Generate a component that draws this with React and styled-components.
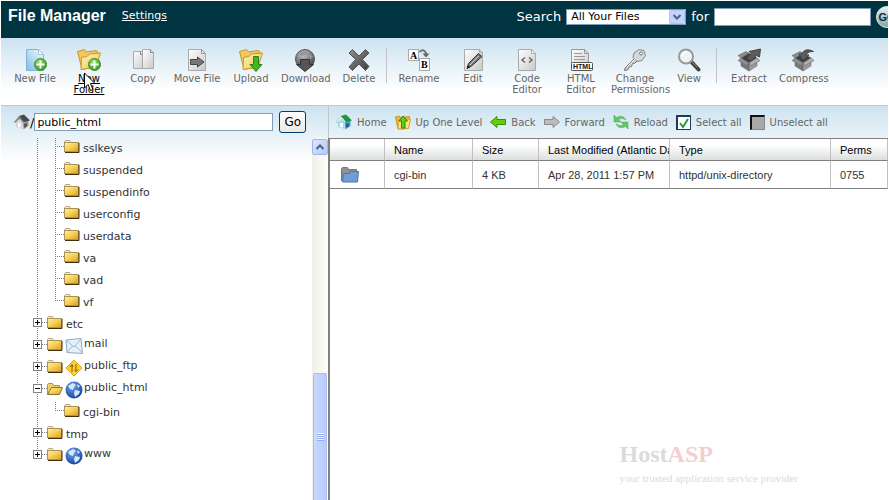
import React from "react";
import styled, { createGlobalStyle, css } from "styled-components";

const tools = [
  { label: "New File", icon: "newFile" },
  { label: "New Folder", icon: "newFolder", active: true },
  { label: "Copy", icon: "copy" },
  { label: "Move File", icon: "moveFile" },
  { label: "Upload", icon: "upload" },
  { label: "Download", icon: "download" },
  { label: "Delete", icon: "delete" },
  { separator: true },
  { label: "Rename", icon: "rename" },
  { label: "Edit", icon: "edit" },
  { label: "Code Editor", icon: "code" },
  { label: "HTML Editor", icon: "html" },
  { label: "Change Permissions", icon: "key" },
  { label: "View", icon: "view" },
  { separator: true },
  { label: "Extract", icon: "extract" },
  { label: "Compress", icon: "compress" }
];

const actions = [
  { label: "Home", icon: "home" },
  { label: "Up One Level", icon: "up" },
  { label: "Back", icon: "back" },
  { label: "Forward", icon: "forward" },
  { label: "Reload", icon: "reload" }
];

const tree = [
  { name: "sslkeys", level: 2 },
  { name: "suspended", level: 2 },
  { name: "suspendinfo", level: 2 },
  { name: "userconfig", level: 2 },
  { name: "userdata", level: 2 },
  { name: "va", level: 2 },
  { name: "vad", level: 2 },
  { name: "vf", level: 2, last: true },
  { name: "etc", level: 1 },
  { name: "mail", level: 1, badge: "mail" },
  { name: "public_ftp", level: 1, badge: "ftp" },
  { name: "public_html", level: 1, badge: "globe", open: true },
  { name: "cgi-bin", level: 2, last: true },
  { name: "tmp", level: 1 },
  { name: "www", level: 1, badge: "globe", last: true }
];

const files = [
  {
    name: "cgi-bin",
    size: "4 KB",
    modified: "Apr 28, 2011 1:57 PM",
    type: "httpd/unix-directory",
    perms: "0755"
  }
];

// Lettering inside the icons, needed by toolIcons below
const SvgLetter = styled.text`
  font-family: "Liberation Serif", serif;
  font-size: 10px;
  font-weight: 700;
  fill: #000;
`;

const HtmlLetter = styled.text`
  font-family: "Liberation Sans", Arial, sans-serif;
  font-size: 7px;
  font-weight: 700;
  fill: #111;
`;

// Shared gradients for all the icons
const IconDefs = () => (
  <DefsSvg aria-hidden="true">
    <defs>
      <linearGradient id="yellow" x1="0" y1="0" x2="1" y2="1">
        <stop offset="0" stopColor="#fff0a8" />
        <stop offset="0.5" stopColor="#f6cf55" />
        <stop offset="1" stopColor="#dc9a1c" />
      </linearGradient>
      <linearGradient id="paleYellow" x1="0" y1="0" x2="1" y2="1">
        <stop offset="0" stopColor="#fff6c4" />
        <stop offset="1" stopColor="#eebf45" />
      </linearGradient>
      <linearGradient id="grayPage" x1="0" y1="0" x2="1" y2="1">
        <stop offset="0" stopColor="#ffffff" />
        <stop offset="1" stopColor="#c9c9c9" />
      </linearGradient>
      <linearGradient id="bluePage" x1="1" y1="0" x2="0" y2="1">
        <stop offset="0" stopColor="#f2fafd" />
        <stop offset="1" stopColor="#7fbfe4" />
      </linearGradient>
      <linearGradient id="dark" x1="0" y1="0" x2="1" y2="1">
        <stop offset="0" stopColor="#8f8f8f" />
        <stop offset="1" stopColor="#3d3d3d" />
      </linearGradient>
      <radialGradient id="green" cx="0.4" cy="0.3" r="0.8">
        <stop offset="0" stopColor="#9be06a" />
        <stop offset="1" stopColor="#2f8f1c" />
      </radialGradient>
      <radialGradient id="ball" cx="0.4" cy="0.25" r="0.8">
        <stop offset="0" stopColor="#c8c8c8" />
        <stop offset="1" stopColor="#3a3a3a" />
      </radialGradient>
      <radialGradient id="blueBall" cx="0.4" cy="0.3" r="0.75">
        <stop offset="0" stopColor="#6fa8ee" />
        <stop offset="1" stopColor="#123c9c" />
      </radialGradient>
    </defs>
  </DefsSvg>
);

const PlusBall = () => (
  <g>
    <circle cx="17.5" cy="16.5" r="6" fill="url(#green)" stroke="#3a8a2a" />
    <path d="M17.5 12.5v8M13.5 16.5h8" stroke="#fff" strokeWidth="2" />
  </g>
);

const BigFolder = () => (
  <g stroke="#c9962a">
    <path d="M.5 3.5l7-2 2 2.500 9.500-1.500 2 1.500v4l-2 11-14 2.500z" fill="#f0c95c" />
    <path d="M4.5 9.5l5.500-1 2.500-2.500 11-1-4.500 14-15 2.500z" fill="url(#paleYellow)" />
  </g>
);

// Open carton seen from its front corner
const Box = () => (
  <g stroke="#606060" strokeWidth="0.5">
    <path d="M4 10l8-5 8 5-8 5z" fill="#3f3f3f" />
    <path d="M4 10l8 5v8l-8-5z" fill="#787878" />
    <path d="M12 15l8-5v8l-8 5z" fill="#9a9a9a" />
    <path d="M4 10l8-5-3-1.500-8 4z" fill="#8a8a8a" />
    <path d="M4 10l8 5-2.500 2.500L1 12.500z" fill="#8f8f8f" />
    <path d="M20 10l-8 5 2.500 2.500 8.500-5z" fill="#b0b0b0" />
  </g>
);

const toolIcons = {
  newFile: (
    <g>
      <path d="M3.5 1.5h12l5 5v16h-17z" fill="url(#bluePage)" stroke="#7fb4d6" />
      <path d="M15.5 1.5l5 5h-5z" fill="#fff" stroke="#9cc4dc" />
      <PlusBall />
    </g>
  ),
  newFolder: (
    <g>
      <BigFolder />
      <PlusBall />
    </g>
  ),
  copy: (
    <g stroke="#aaa">
      <path d="M2.5 3.5h8l3 3v14h-11z" fill="url(#grayPage)" />
      <path d="M11.5 1.5h8l3 3v16h-11z" fill="url(#grayPage)" />
      <path d="M19.5 1.5v3h3M9.5 3.5v3h2" fill="#ddd" stroke="#888" />
    </g>
  ),
  moveFile: (
    <g>
      <path d="M3.5 1.5h13l4 4v17h-17z" fill="url(#grayPage)" stroke="#aaa" />
      <path d="M16.5 1.5v4h4z" fill="#eee" stroke="#999" />
      <path d="M5.5 11.5h7V9l6.500 5-6.500 5v-2.500h-7z" fill="#777" stroke="#444" />
    </g>
  ),
  upload: (
    <g>
      <BigFolder />
      <path d="M14.5 8.500h5v8h3.500l-6 7-6-7h3.500z" fill="#45b328" stroke="#2c8418" />
    </g>
  ),
  download: (
    <g>
      <circle cx="12" cy="11" r="9.5" fill="url(#ball)" stroke="#555" />
      <path d="M5 5l5-2 5 1-2 3-5 1zM16 5l4 4-3 2z" fill="#999" />
      <path d="M7.5 11.5h9v5h4l-8.500 7-8.500-7h4z" fill="#555" stroke="#333" />
    </g>
  ),
  delete: (
    <path
      d="M5.5 1.5L12 8l6.500-6.500L22 5l-6.500 6.500 6.500 7-3.500 4L12 16l-6.500 6.500L2 19l6.500-7.500L2 5z"
      fill="url(#dark)"
      stroke="#555"
    />
  ),
  rename: (
    <g>
      <rect x="1.5" y="1.5" width="10" height="11" fill="#fff" stroke="#aaa" />
      <rect x="12.5" y="10.5" width="10" height="12" fill="#fff" stroke="#aaa" />
      <SvgLetter x="3" y="11">A</SvgLetter>
      <SvgLetter x="14" y="20">B</SvgLetter>
      <path d="M12.5 4q4-4 6.500 1v1" fill="none" stroke="#777" strokeWidth="2" />
      <path d="M15.5 5.500h7L19 9.500z" fill="#666" />
    </g>
  ),
  edit: (
    <g>
      <path d="M3.5 1.5h15l3 3v18h-18z" fill="url(#grayPage)" stroke="#aaa" />
      <path d="M18.5 1.5v3h3" fill="none" stroke="#aaa" />
      <path d="M17.500 5.500l3.500 3L10.500 18 6 20.500l1.500-5z" fill="#777" stroke="#333" />
      <path d="M17.500 8L9 17" stroke="#ddd" />
      <path d="M6 20.500l1-3 2 2z" fill="#111" />
    </g>
  ),
  code: (
    <g>
      <path d="M3.5 1.5h13l4 4v17h-17z" fill="url(#grayPage)" stroke="#aaa" />
      <path d="M16.5 1.5v4h4z" fill="#fff" stroke="#aaa" />
      <path d="M10 9.500l-3 2.500 3 2.500M14 9.500l3 2.500-3 2.500" fill="none" stroke="#666" strokeWidth="1.5" />
    </g>
  ),
  html: (
    <g>
      <path d="M2.5 1.5h13l4 4v17h-17z" fill="url(#grayPage)" stroke="#999" />
      <path d="M15.5 1.5v4h4M5 5.500h8M5 8.500h11M5 11.500h11" fill="none" stroke="#999" />
      <rect x="2.5" y="14.5" width="21" height="8" rx="1" fill="#fff" stroke="#555" />
      <HtmlLetter x="4" y="21">HTML</HtmlLetter>
    </g>
  ),
  key: (
    <g>
      <path
        d="M12 10L2 20l-.5 2.500 3-.5 1.500-3 2.500-.5 1-3 2.500-.5 3-3z"
        fill="#ccc"
        stroke="#777"
      />
      <path d="M11 5l5-3.500 5 1 1.500 5-3.500 5-5 1-4-4z" fill="#d8d8d8" stroke="#888" />
      <circle cx="18" cy="5.5" r="1.5" fill="#fff" stroke="#777" />
      <path d="M12 11l-8 8" stroke="#f6f6f6" />
    </g>
  ),
  view: (
    <g>
      <path d="M14.5 14l7 7.500" stroke="#444" strokeWidth="4" strokeLinecap="round" />
      <path d="M15 14l5 5" stroke="#888" />
      <circle cx="9" cy="8.5" r="7" fill="#eef3f6" stroke="#999" strokeWidth="2" />
      <path d="M5 8q1-4 5-4" fill="none" stroke="#fff" strokeWidth="2" />
    </g>
  ),
  extract: (
    <g>
      <Box />
      <path d="M10 10l5-5-3-1.500L23.500 1l-1 8-3-1.500-6 5.500z" fill="#5c5c5c" stroke="#444" />
    </g>
  ),
  compress: (
    <g>
      <Box />
      <path d="M22.500 3.500Q14-1 11 6H8l4 6.500L18 7h-3q2-4 7.500-3.500z" fill="#5c5c5c" stroke="#444" />
    </g>
  )
};

const smallIcons = {
  home: (
    <g>
      <path d="M2 8l6-2 1 9-7-2z" fill="#9fd4f5" />
      <path d="M8.500 7l6-1v6l-5 3.500z" fill="#4e9ad0" />
      <path d="M4 9h3v4.500l-3-.5z" fill="#fff" />
      <path d="M0 8l5-6 5 5-1 1.500L5.500 5 1 9z" fill="#eaf6ee" stroke="#79b79a" strokeWidth="0.5" />
      <path d="M5 2l5-1.500 6 6L10 8z" fill="#159a35" />
      <path d="M10 10l3-1v3l-3 2z" fill="#1d5f96" />
    </g>
  ),
  up: (
    <g>
      <path d="M.5 3l4-1 1 1.500 9-1L13 14.500l-10 .5z" fill="#eab93a" stroke="#c9962a" />
      <path d="M3.500 6l12-1-2 9.500-10.500.5z" fill="#ffe07a" stroke="#d3a233" />
      <path d="M8 2l4.500 5H10v7H6.500V7H4z" fill="#5fce1e" stroke="#31860f" />
    </g>
  ),
  back: (
    <path d="M.5 8L7 2.500v3h8.500v5H7v3z" fill="#62cf0d" stroke="#3c8d0a" />
  ),
  forward: (
    <path d="M15.500 8L9 2.500v3H.5v5H9v3z" fill="#bcbcbc" stroke="#8a8a8a" />
  ),
  reload: (
    <g fill="#65c36b" stroke="#46a854" strokeWidth="0.5">
      <path d="M1 1v7h7L5.500 5.500Q9 3 13 6 10 0 3.500 3.500z" />
      <path d="M15 15V8H8l2.500 2.500Q7 13 3 10q3 6 9.500 2.500z" />
    </g>
  ),
  houseGray: (
    <g>
      <path d="M2 8l6-2 1 9-7-2z" fill="#d5d5d5" />
      <path d="M8.500 7l6-1v6l-5 3.500z" fill="#999" />
      <path d="M4 9h2.500v4.500L4 13z" fill="#fff" />
      <path d="M0 8l5-6 5 5-1 1.500L5.500 5 1 9z" fill="#888" />
      <path d="M5 2l5-1.500 6 6L10 8z" fill="#4a4a4a" />
      <path d="M10 10l3-1v3l-3 2z" fill="#555" />
    </g>
  )
};

const badges = {
  mail: (
    <g>
      <path d="M1 3l15-1.500 1.500 15L2 15.500z" fill="#e6f0f8" stroke="#8fabc4" />
      <path d="M1 3l8 7 7-8M2 15.500L7.500 9M17.500 16l-7-7" fill="none" stroke="#9db9d0" />
    </g>
  ),
  ftp: (
    <g>
      <path d="M9 1l8 8-8 8-8-8z" fill="#fbd02f" stroke="#d9a514" strokeLinejoin="round" />
      <path d="M7 13V6M5 8l2-2.500L8 8M11 5v7M9.500 10.500l1.500 2 2-2" fill="none" stroke="#8a5a0a" />
    </g>
  ),
  globe: (
    <g>
      <circle cx="9" cy="9" r="8.5" fill="url(#blueBall)" />
      <path d="M3 5l5-3 3 2-2 2-1 3-3-1zM12 3l3 2-2 2zM10 9l5 1-1 3-4 3-1-4z" fill="#d5e8fa" />
    </g>
  )
};

const Icon = ({ name }) => (
  <ToolSvg viewBox="0 0 24 24" aria-hidden="true">
    {toolIcons[name]}
  </ToolSvg>
);

const SmallIcon = ({ name }) => (
  <SmallSvg viewBox="0 0 16 16" aria-hidden="true">
    {smallIcons[name]}
  </SmallSvg>
);

const FolderIcon = ({ open }) => (
  <SmallSvg viewBox="0 0 16 16" aria-hidden="true">
    {open ? (
      <g>
        <path d="M.5 13.500v-10l1-1h4l1 2h6v3" fill="#f3cf68" stroke="#a8935a" />
        <path d="M.5 13.500l4-7h11l-3 7z" fill="url(#yellow)" stroke="#8d712c" />
      </g>
    ) : (
      <g>
        <path d="M.5 4.500v-2l1-1h4l1 2v1" fill="#fbeeb4" stroke="#b8a779" />
        <rect x="0.5" y="3.5" width="14" height="9" fill="url(#yellow)" stroke="#a8935a" />
        <path d="M1 13.500h14V4" fill="none" stroke="#3f3110" />
      </g>
    )}
  </SmallSvg>
);

// One 22px high slice of the dotted tree line
const Guide = ({ end, branch, toggle }) => (
  <GuideSvg $branch={branch} aria-hidden="true">
    <path d={`M8.500 0V${end ? 9 : 22}`} stroke="#808080" strokeDasharray="1 1" />
    {branch && <path d="M8 8.500h9" stroke="#808080" strokeDasharray="1 1" />}
    {toggle && (
      <g>
        <path d="M13 8.500h5" stroke="#808080" strokeDasharray="1 1" />
        <rect x="4.5" y="4.5" width="8" height="8" fill="#fff" stroke="#808080" />
        <path d={toggle === "minus" ? "M6 8.500h5" : "M6 8.500h5M8.500 6v5"} stroke="#000" />
      </g>
    )}
  </GuideSvg>
);

const TreeItem = ({ item }) => (
  <TreeRow>
    {item.level === 1 ? (
      <Guide toggle={item.open ? "minus" : "plus"} end={item.last} />
    ) : (
      <>
        <Guide />
        <Guide branch end={item.last} />
      </>
    )}
    <FolderIcon open={item.open} />
    {item.badge && (
      <BadgeSvg viewBox="0 0 18 18" aria-hidden="true">
        {badges[item.badge]}
      </BadgeSvg>
    )}
    <TreeLink href="#" $raised={!!item.badge}>
      {item.name}
    </TreeLink>
  </TreeRow>
);

const App = () => {
  return (
    <Page>
      <GlobalStyle />
      <IconDefs />
      <Header>
        <Title>File Manager</Title>
        <SettingsLink href="#">Settings</SettingsLink>
        <SearchForm onSubmit={(e) => e.preventDefault()}>
          <label htmlFor="scope">Search</label>
          <SelectWrap>
            <ScopeSelect id="scope">
              <option>All Your Files</option>
            </ScopeSelect>
            <SelectArrow viewBox="0 0 16 14" aria-hidden="true">
              <rect x="0.5" y="0.5" width="15" height="13" rx="1" fill="#c3d3fd" stroke="#b0c4f5" />
              <path d="M4.500 5l3.500 3.500L11.500 5" fill="none" stroke="#4d6185" strokeWidth="2" />
            </SelectArrow>
          </SelectWrap>
          <label htmlFor="query">for</label>
          <QueryInput id="query" type="text" />
          <SearchGo type="submit">GO</SearchGo>
        </SearchForm>
      </Header>

      <Toolbar>
        {tools.map((tool, index) =>
          tool.separator ? (
            <ToolSeparator key={index} />
          ) : (
            <ToolButton key={index} type="button" $active={tool.active}>
              <Icon name={tool.icon} />
              <ToolLabel>{tool.label}</ToolLabel>
              {tool.active && (
                <Pointer viewBox="0 0 13 20" aria-hidden="true">
                  <path
                    d="M.5 1v15l3.500-3.500 2.500 6 2.500-1-2.500-6H11z"
                    fill="#fff"
                    stroke="#000"
                  />
                </Pointer>
              )}
            </ToolButton>
          )
        )}
      </Toolbar>

      <Workspace>
        <Sidebar>
          <PathForm onSubmit={(e) => e.preventDefault()}>
            <SmallIcon name="houseGray" />
            <label htmlFor="path">/</label>
            <PathInput id="path" type="text" defaultValue="public_html" />
            <GoButton type="submit">Go</GoButton>
          </PathForm>
          <TreePane>
            <Tree>
              {tree.map((item) => (
                <TreeItem key={`${item.level}-${item.name}`} item={item} />
              ))}
            </Tree>
            <Scrollbar>
              <ScrollUp type="button" aria-label="Scroll up">
                <ArrowSvg viewBox="0 0 10 8" aria-hidden="true">
                  <path d="M1.500 6L5 2.500 8.500 6" fill="none" stroke="#4d6185" strokeWidth="2" />
                </ArrowSvg>
              </ScrollUp>
              <ScrollThumb>
                <Grip />
              </ScrollThumb>
            </Scrollbar>
          </TreePane>
        </Sidebar>

        <Main>
          <ActionBar>
            {actions.map((action) => (
              <ActionButton key={action.label} type="button">
                <SmallIcon name={action.icon} />
                {action.label}
              </ActionButton>
            ))}
            <CheckLabel>
              <CheckBox type="checkbox" defaultChecked />
              Select all
            </CheckLabel>
            <CheckLabel>
              <CheckBox type="checkbox" />
              Unselect all
            </CheckLabel>
          </ActionBar>
          <FilePane>
            <FileTable>
              <colgroup>
                <Col $width={55} />
                <Col $width={88} />
                <Col $width={66} />
                <Col $width={131} />
                <Col />
                <Col $width={57} />
              </colgroup>
              <thead>
                <tr>
                  <HeadCell aria-label="Icon" />
                  <HeadCell>Name</HeadCell>
                  <HeadCell>Size</HeadCell>
                  <HeadCell>Last Modified (Atlantic Da</HeadCell>
                  <HeadCell>Type</HeadCell>
                  <HeadCell>Perms</HeadCell>
                </tr>
              </thead>
              <tbody>
                {files.map((file) => (
                  <tr key={file.name}>
                    <Cell>
                      <RowIcon viewBox="0 0 18 16" aria-hidden="true">
                        <path d="M.5 14V1.500l1-1h5l1 2h8V8" fill="#8f8f8f" stroke="#777" />
                        <path d="M2.500 6.500h6l1-2h8l-1 10.500H1.500z" fill="#6f9dd6" stroke="#4a76b0" />
                      </RowIcon>
                    </Cell>
                    <Cell>{file.name}</Cell>
                    <Cell>{file.size}</Cell>
                    <Cell>{file.modified}</Cell>
                    <Cell>{file.type}</Cell>
                    <Cell>{file.perms}</Cell>
                  </tr>
                ))}
              </tbody>
            </FileTable>
            <Watermark>
              <Brand>
                Host<Pink>ASP</Pink>
              </Brand>
              <Tagline>
                your trusted <Pink>a</Pink>pplication <Pink>s</Pink>ervice <Pink>p</Pink>rovider
              </Tagline>
            </Watermark>
          </FilePane>
        </Main>
      </Workspace>
    </Page>
  );
};

const GlobalStyle = createGlobalStyle`
  * {
    box-sizing: border-box;
  }

  body {
    margin: 0;
    overflow: hidden;
    background: #fff;
    font-family: "DejaVu Sans", Verdana, sans-serif;
    font-size: 11px;
    color: #333;
  }

  button,
  input,
  select {
    font-family: inherit;
    margin: 0;
  }
`;

const DefsSvg = styled.svg`
  position: absolute;
  width: 0;
  height: 0;
`;

const Page = styled.div`
  display: flex;
  flex-direction: column;
  height: 100vh;
  padding: 1px 1px 0;
  overflow: hidden;
`;

const Header = styled.header`
  display: flex;
  align-items: flex-start;
  flex-shrink: 0;
  height: 37px;
  padding: 6px 0 0 7px;
  overflow: hidden;
  background: #003440;
  color: #fff;
`;

const Title = styled.h1`
  margin: 0;
  font-family: "Liberation Sans", Arial, sans-serif;
  font-size: 16px;
  line-height: 18px;
  font-weight: 700;
`;

const SettingsLink = styled.a`
  margin-left: 16px;
  line-height: 18px;
  color: #fff;
`;

const SearchForm = styled.form`
  display: flex;
  align-items: center;
  gap: 5px;
  height: 19px;
  margin-left: auto;
  margin-right: -10px;
  font-size: 13px;
`;

const SelectWrap = styled.span`
  position: relative;
  display: flex;
`;

const ScopeSelect = styled.select`
  appearance: none;
  width: 120px;
  height: 16px;
  padding: 0 4px;
  border: 1px solid #7f9db9;
  border-radius: 0;
  background: #fff;
  color: #000;
  font-size: 11px;
  line-height: 14px;
`;

const SelectArrow = styled.svg`
  position: absolute;
  top: 1px;
  right: 1px;
  width: 16px;
  height: 14px;
  pointer-events: none;
`;

const QueryInput = styled.input`
  width: 157px;
  height: 18px;
  padding: 0 3px;
  border: 1px solid #7f9db9;
  background: #fff;
`;

const SearchGo = styled.button`
  flex-shrink: 0;
  width: 22px;
  height: 22px;
  padding: 0;
  border: 1px solid #dfeff2;
  border-radius: 50%;
  background: linear-gradient(#e4f2f4, #7ba6ae);
  color: #10272c;
  font-family: "Liberation Sans", Arial, sans-serif;
  font-size: 11px;
  font-weight: 700;
`;

const Toolbar = styled.nav`
  display: flex;
  align-items: flex-start;
  flex-shrink: 0;
  padding: 10px 7px;
  border-bottom: 1px solid #c4c4c4;
  background: linear-gradient(#cde3f0, #fff 80%);
`;

const ToolButton = styled.button`
  position: relative;
  display: flex;
  flex-direction: column;
  flex-shrink: 0;
  gap: 1px;
  width: 54px;
  height: 47px;
  padding: 0 3px;
  border: 0;
  background: none;
  color: #666;
  cursor: pointer;

  ${(props) =>
    props.$active &&
    css`
      color: #000;
      text-decoration: underline;
    `}
`;

const ToolLabel = styled.span`
  width: 100%;
  font-size: 10px;
  line-height: 11px;
  text-align: center;
`;

const ToolSeparator = styled.div`
  width: 1px;
  height: 35px;
  margin-right: 5px;
  background: #c0c4c8;
`;

const ToolSvg = styled.svg`
  align-self: center;
  width: 24px;
  height: 24px;
`;

const Pointer = styled.svg`
  position: absolute;
  top: 24px;
  left: 22px;
  width: 13px;
  height: 20px;
`;

const Workspace = styled.div`
  display: flex;
  flex: 1;
  min-height: 0;
  background: linear-gradient(#cde3f0, #fff 56px);
`;

const Sidebar = styled.aside`
  display: flex;
  flex-direction: column;
  flex-shrink: 0;
  width: 327px;
`;

const PathForm = styled.form`
  display: flex;
  align-items: center;
  flex-shrink: 0;
  height: 32px;
  padding-left: 13px;
  color: #000;
  font-size: 13px;
`;

const PathInput = styled.input`
  width: 239px;
  height: 18px;
  padding: 0 2px;
  border: 1px solid #7f9db9;
  background: #fff;
  color: #000;
  font-size: 11px;
`;

const GoButton = styled.button`
  width: 27px;
  height: 22px;
  margin-left: 6px;
  padding: 0;
  border: 1px solid #003c74;
  border-radius: 3px;
  background: linear-gradient(#fff, #ece9e0);
  color: #000;
  font-size: 12px;
`;

const TreePane = styled.div`
  display: flex;
  flex: 1;
  min-height: 0;
`;

const Tree = styled.ul`
  flex: 1;
  margin: 0;
  padding: 0 0 0 28px;
  overflow: hidden;
  list-style: none;
`;

const TreeRow = styled.li`
  display: flex;
  align-items: flex-start;
  height: 22px;
`;

const GuideSvg = styled.svg`
  flex-shrink: 0;
  width: ${(props) => (props.$branch ? "17px" : "18px")};
  height: 22px;
  shape-rendering: crispEdges;
`;

const SmallSvg = styled.svg`
  flex-shrink: 0;
  width: 16px;
  height: 16px;

  ${TreeRow} & {
    margin-top: 1px;
  }
`;

const BadgeSvg = styled.svg`
  flex-shrink: 0;
  width: 18px;
  height: 18px;
  margin: 1px 0 0 2px;
`;

const TreeLink = styled.a`
  margin-left: ${(props) => (props.$raised ? "1px" : "3px")};
  line-height: ${(props) => (props.$raised ? "15px" : "22px")};
  color: #333;
  text-decoration: none;
`;

const Scrollbar = styled.div`
  display: flex;
  flex-direction: column;
  width: 16px;
  padding-top: 1px;
  background: linear-gradient(90deg, #f0efe6, #fefefb);
`;

const ScrollUp = styled.button`
  display: flex;
  align-items: center;
  justify-content: center;
  height: 16px;
  padding: 0;
  border: 1px solid #9fb5ee;
  border-radius: 2px;
  background: linear-gradient(135deg, #dbe5ff, #b6cafb);
`;

const ArrowSvg = styled.svg`
  width: 10px;
  height: 8px;
`;

const ScrollThumb = styled.div`
  display: flex;
  align-items: center;
  justify-content: center;
  height: 127px;
  margin: auto 1px 0;
  border: 1px solid #a9bff2;
  border-bottom: 0;
  border-radius: 2px 2px 0 0;
  background: linear-gradient(90deg, #cad8ff, #b9cbfb);
`;

const Grip = styled.div`
  width: 7px;
  height: 8px;
  background: repeating-linear-gradient(#eef4fe 0 1px, #8cabf0 1px 2px);
`;

const Main = styled.main`
  display: flex;
  flex-direction: column;
  flex: 1;
  min-width: 0;
`;

const ActionBar = styled.div`
  display: flex;
  align-items: center;
  flex-shrink: 0;
  gap: 8px;
  height: 32px;
  padding-left: 7px;
  border-left: 1px solid #c0c6ca;
  color: #666;
  font-size: 10px;
  white-space: nowrap;
`;

const ActionButton = styled.button`
  display: flex;
  align-items: center;
  gap: 5px;
  padding: 0;
  border: 0;
  background: none;
  color: #666;
  font-size: 10px;
  cursor: pointer;
`;

const CheckLabel = styled.label`
  display: flex;
  align-items: center;
  gap: 5px;
`;

const CheckBox = styled.input`
  appearance: none;
  width: 15px;
  height: 15px;
  margin: 0;
  border: 1px solid #8a8a8a;
  border-top: 2px solid #111;
  border-left: 2px solid #111;
  background: #a8a8a8;

  &:checked {
    border: 1px solid #1d3c5c;
    border-top-width: 2px;
    border-left-width: 2px;
    background: #fff
      url("data:image/svg+xml,%3Csvg xmlns='http://www.w3.org/2000/svg' viewBox='0 0 12 12'%3E%3Cpath d='M2 6l3 4 5-8' fill='none' stroke='%2320a038' stroke-width='2'/%3E%3C/svg%3E")
      center / 12px 12px no-repeat;
  }
`;

const FilePane = styled.div`
  display: flex;
  flex-direction: column;
  flex: 1;
  border-left: 2px solid #808080;
  background: #fff;
`;

const FileTable = styled.table`
  width: 100%;
  border-collapse: separate;
  border-spacing: 0;
  table-layout: fixed;
  border-top: 1px solid #808080;
  font-family: "Liberation Sans", Arial, sans-serif;
  font-size: 11px;
`;

const Col = styled.col`
  width: ${(props) => (props.$width ? `${props.$width}px` : "auto")};
`;

const cellStyle = css`
  padding: 0 0 0 9px;
  overflow: hidden;
  border-right: 1px solid #c0c0c0;
  border-bottom: 1px solid #808080;
  text-align: left;
  white-space: nowrap;
`;

const HeadCell = styled.th`
  ${cellStyle}
  height: 22px;
  background: linear-gradient(#fff 30%, #dcdfdf);
  color: #000;
  font-weight: 400;
`;

const Cell = styled.td`
  ${cellStyle}
  height: 28px;
`;

const RowIcon = styled.svg`
  display: block;
  width: 18px;
  height: 16px;
  margin-left: 2px;
`;

const Watermark = styled.div`
  margin: auto 90px 12px auto;
  font-family: "Liberation Serif", "Times New Roman", serif;
  color: #dcdadb;
`;

const Brand = styled.div`
  font-size: 24px;
  line-height: 28px;
  font-weight: 700;
`;

const Tagline = styled.div`
  font-size: 11px;
  line-height: 20px;
`;

const Pink = styled.span`
  color: #f3cfd0;
`;

export default App;
